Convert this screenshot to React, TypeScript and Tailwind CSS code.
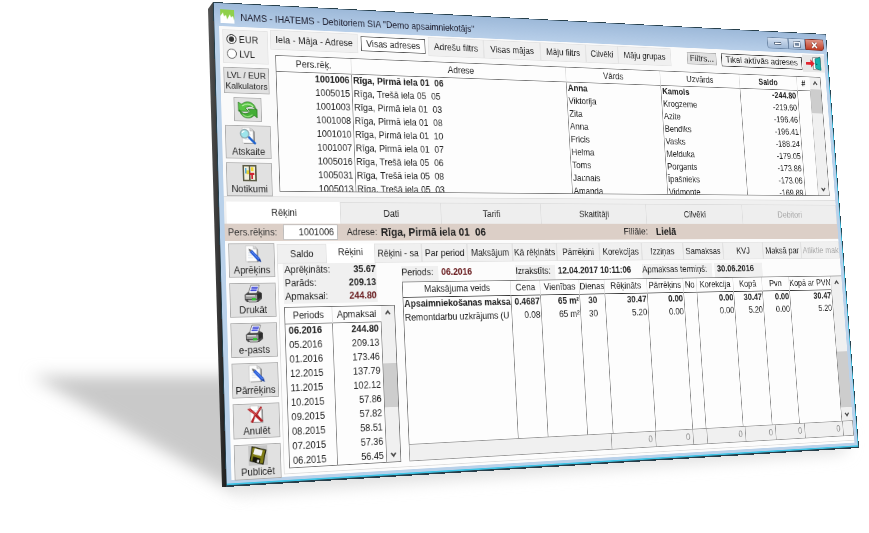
import { useState } from 'react'
import type { ReactNode } from 'react'
import clsx from 'clsx'

const WIDTH = 920
const HEIGHT = 610

// corners of the tilted window: top left, top right, bottom right, bottom left
const CORNERS = [
    [213, 2],
    [826, 34],
    [859, 448],
    [226, 487],
]

function tilt() {
    const [[x0, y0], [x1, y1], [x2, y2], [x3, y3]] = CORNERS
    const dx1 = x1 - x2
    const dx2 = x3 - x2
    const sx = x0 - x1 + x2 - x3
    const dy1 = y1 - y2
    const dy2 = y3 - y2
    const sy = y0 - y1 + y2 - y3
    const det = dx1 * dy2 - dx2 * dy1
    const g = (sx * dy2 - dx2 * sy) / det
    const h = (dx1 * sy - sx * dy1) / det
    const m = [
        (x1 - x0 + g * x1) / WIDTH, (y1 - y0 + g * y1) / WIDTH, 0, g / WIDTH,
        (x3 - x0 + h * x3) / HEIGHT, (y3 - y0 + h * y3) / HEIGHT, 0, h / HEIGHT,
        0, 0, 1, 0,
        x0, y0, 0, 1,
    ]
    return `matrix3d(${m.join(',')})`
}

const topTabs = [
    { label: 'Iela - Māja - Adrese', width: 'w-[118px]' },
    { label: 'Visas adreses', width: 'w-[90px]' },
    { label: 'Adrešu filtrs', width: 'w-[80px]' },
    { label: 'Visas mājas', width: 'w-[84px]' },
    { label: 'Māju filtrs', width: 'w-[69px]' },
    { label: 'Cilvēki', width: 'w-[50px]' },
    { label: 'Māju grupas', width: 'w-[84px]' },
]

const people = [
    ['1001006', 'Rīga, Pirmā iela 01  06', 'Anna', 'Kamols', '-244.80'],
    ['1005015', 'Rīga, Trešā iela 05  05', 'Viktorija', 'Krogzeme', '-219.60'],
    ['1001003', 'Rīga, Pirmā iela 01  03', 'Zita', 'Azite', '-196.46'],
    ['1001008', 'Rīga, Pirmā iela 01  08', 'Anna', 'Bendiks', '-196.41'],
    ['1001010', 'Rīga, Pirmā iela 01  10', 'Fricis', 'Vasks', '-188.24'],
    ['1001007', 'Rīga, Pirmā iela 01  07', 'Helma', 'Melduka', '-179.05'],
    ['1005016', 'Rīga, Trešā iela 05  06', 'Toms', 'Porgants', '-173.86'],
    ['1005031', 'Rīga, Trešā iela 05  08', 'Jaunais', 'Īpašnieks', '-173.06'],
    ['1005013', 'Rīga, Trešā iela 05  03', 'Amanda', 'Vidmonte', '-169.89'],
]

const mainTabs = [
    { label: 'Rēķini', width: 'w-[149px]' },
    { label: 'Dati', width: 'w-[138px]' },
    { label: 'Tarifi', width: 'w-[144px]' },
    { label: 'Skaitītāji', width: 'w-[160px]' },
    { label: 'Cilvēki', width: 'w-[154px]' },
    { label: 'Debitori', width: 'w-[158px]' },
]

const subTabs = [
    'Saldo', 'Rēķini', 'Rēķini - sa', 'Par period', 'Maksājum', 'Kā rēķināts', 'Pārrēķini',
    'Korekcijas', 'Izziņas', 'Samaksas', 'KVJ', 'Maksā par', 'Atliktie mak',
]

const periods = [
    ['06.2016', '244.80'],
    ['05.2016', '209.13'],
    ['01.2016', '173.46'],
    ['12.2015', '137.79'],
    ['11.2015', '102.12'],
    ['10.2015', '57.86'],
    ['09.2015', '57.82'],
    ['08.2015', '58.51'],
    ['07.2015', '57.36'],
    ['06.2015', '56.45'],
]

const chargeColumns = [
    { label: 'Maksājuma veids', width: 'w-[151px]' },
    { label: 'Cena', width: 'w-[43px]' },
    { label: 'Vienības', width: 'w-[60px]' },
    { label: 'Dienas', width: 'w-[33px]' },
    { label: 'Rēķināts', width: 'w-[67px]' },
    { label: 'Pārrēķins', width: 'w-[58px]' },
    { label: 'No', width: 'w-[22px]' },
    { label: 'Korekcija', width: 'w-[61px]' },
    { label: 'Kopā', width: 'w-[49px]' },
    { label: 'Pvn', width: 'w-[48px]' },
    { label: 'Kopā ar PVN', width: 'w-[64px]' },
]

const charges = [
    ['Apsaimniekošanas maksa', '0.4687', '65 m²', '30', '30.47', '0.00', '', '0.00', '30.47', '0.00', '30.47'],
    ['Remontdarbu uzkrājums (U', '0.08', '65 m²', '30', '5.20', '0.00', '', '0.00', '5.20', '0.00', '5.20'],
]

const totals = ['', '', '', '', '0', '0', '', '0', '0', '0', '0']

function Chevron({ down }: { down?: boolean }) {
    return (
        <svg viewBox="0 0 10 10" className="w-[10px] h-[10px] my-1 shrink-0" fill="none" stroke="#444" strokeWidth="2">
            <path d={down ? 'M2 3l3 4 3-4' : 'M2 7l3-4 3 4'} />
        </svg>
    )
}

function ScrollBar({ before, thumb }: { before: string; thumb: string }) {
    return (
        <div className="flex flex-col items-center w-[18px] shrink-0 bg-[#f0f0f0]">
            <Chevron />
            <div className={before} />
            <div className={clsx('w-full bg-[#cdcdcd]', thumb)} />
            <div className="grow" />
            <Chevron down />
        </div>
    )
}

function PageIcon({ children }: { children?: ReactNode }) {
    return (
        <svg viewBox="0 0 24 24" className="w-6 h-6">
            <path d="M6 2h10l4 4v16H6z" fill="#8b8b8b" />
            <path d="M4 1h10l4 4v16H4z" fill="#fdfdfd" stroke="#c3c3c3" strokeWidth="0.7" />
            <path d="M14 1v4h4" fill="#dcdcdc" stroke="#a9a9a9" strokeWidth="0.7" />
            <path d="M7 7h6M7 10h8M7 13h8M7 16h6" stroke="#d3dbe6" />
            {children}
        </svg>
    )
}

function PenIcon() {
    return (
        <PageIcon>
            <path d="M9 9l3-2.500 10 10.500-3 3z" fill="#2458d8" />
            <path d="M11.500 8.500l9 9.500" stroke="#6f9df5" />
            <path d="M19 20l3-3 1.500 5z" fill="#143a9a" />
            <path d="M9 9l3-2.500-4.500-2z" fill="#666" />
        </PageIcon>
    )
}

function SearchIcon() {
    return (
        <PageIcon>
            <path d="M12 13l8 8" stroke="#1e63cf" strokeWidth="3" strokeLinecap="round" />
            <circle cx="7" cy="9" r="5.500" fill="#9ce5ec" stroke="#8fa9af" strokeWidth="1.500" />
            <path d="M4 8a3 3 0 0 1 3-2.500" stroke="#fff" strokeWidth="1.500" fill="none" />
        </PageIcon>
    )
}

function CancelIcon() {
    return (
        <PageIcon>
            <path d="M0 5l4-1 7 6 6-8 2 1-6 9 7 8-3 1-7-7L7 22l-3-1 5-9z" fill="#b31f24" />
            <path d="M2.500 5l8 6.500L17 4" stroke="#e2686a" fill="none" />
        </PageIcon>
    )
}

function NotesIcon() {
    return (
        <svg viewBox="0 0 24 24" className="w-6 h-6">
            <path d="M3 1h18v21H3z" fill="#5b5b45" />
            <path d="M5 3h6v17H5zM13 3h6v17h-6z" fill="#f1efdc" />
            <path d="M6 5h2v7H6z" fill="#59aee0" />
            <path d="M8 8h3v5H8z" fill="#e6d233" />
            <path d="M14 4h3v5h-3z" fill="#f3d92e" />
            <path d="M12 11h6v3h-2v5h-2v-5h-2z" fill="#cf2430" />
        </svg>
    )
}

function PrinterIcon() {
    return (
        <svg viewBox="0 0 24 24" className="w-6 h-6">
            <path d="M9 1h11l-3 10H6z" fill="#fff" stroke="#555" strokeWidth="0.8" />
            <path d="M10 3.500h8M9.500 5.500h8M8.500 7.500h8" stroke="#3f49d8" strokeWidth="1.3" />
            <path d="M1 13l5-4 1 2h9l2-3 5 3v7l-5 4H4l-3-3z" fill="#4a4a4a" />
            <path d="M2 13h15v5H2z" fill="#9a9a9a" />
            <path d="M17 12l5-2v6l-5 3z" fill="#2c2c2c" />
            <path d="M3 14h11" stroke="#e6e6e6" strokeWidth="1.5" />
            <path d="M4 19h14l-2 3H6z" fill="#c9c9c9" stroke="#333" strokeWidth="0.6" />
            <path d="M10 17h5v3h-5z" fill="#35c435" />
        </svg>
    )
}

function FloppyIcon() {
    return (
        <svg viewBox="0 0 24 24" className="w-6 h-6">
            <path d="M0 0h24v24H0z" fill="#c6c6c6" />
            <path d="M5 1l17 5-4 17-16-5z" fill="#807d16" stroke="#1c1c0a" strokeWidth="1.2" />
            <path d="M8 3l10 3-2 7-10-3z" fill="#f2f2f2" />
            <path d="M6 13l9 3-1.500 6-9-3z" fill="#15150c" />
            <path d="M11 17l2.500.8-1 3.200-2.300-.8z" fill="#ececec" />
        </svg>
    )
}

function RefreshIcon() {
    return (
        <svg viewBox="0 0 28 26" className="w-7 h-[26px]" stroke="#24701c" strokeWidth="0.8">
            <path d="M2 3l4 3C11 1 21 1 24 10l1 3c-4-6-10-6-14-2l4 4H2z" fill="#58c544" />
            <path d="M26 23l-4-3C17 25 7 25 4 16l-1-3c4 6 10 6 14 2l-3-3h12z" fill="#43ae35" />
            <path d="M7 8c5-4 11-3 14 1" stroke="#b9f0a6" strokeWidth="1.5" fill="none" />
            <path d="M7 19c3 3 9 4 13 0" stroke="#8ee07a" strokeWidth="1.5" fill="none" />
        </svg>
    )
}

function DoorIcon() {
    return (
        <svg viewBox="0 0 28 22" className="w-7 h-[22px]">
            <path d="M13 2h13v18H13z" fill="#fff" stroke="#555" />
            <path d="M17 4l9-3v20l-9-3z" fill="#17b3ad" stroke="#0a6c6a" strokeWidth="0.8" />
            <path d="M1 9h8V5l7 6-7 6v-4H1z" fill="#e32530" />
            <circle cx="19.5" cy="12" r="1" fill="#043f3f" />
        </svg>
    )
}

function SideButton({ label, icon }: { label: string; icon: ReactNode }) {
    return (
        <button className="flex flex-col items-center justify-between h-[43px] w-full shrink-0 pt-px bg-[#e1e1e1] border border-[#adadad] whitespace-nowrap">
            {icon}
            <span className="leading-4">{label}</span>
        </button>
    )
}

function TitleBar() {
    return (
        <header className="flex items-start h-[30px] shrink-0 pl-2 pr-[5px] bg-linear-to-b from-[#9db9d9] to-[#b8cfe9]">
            <svg viewBox="0 0 18 18" className="w-[18px] h-[18px] mt-2">
                <path d="M0 0h18v18H0z" fill="#8fd04a" />
                <path d="M0 18V9l3-5 2 5 2-2 2 6 3-7 2 4 2-2 2 6v4z" fill="#fff" />
            </svg>
            <h1 className="grow pl-2 pt-2 leading-5 text-[#1b1b2b]">
                NAMS - IHATEMS - Debitoriem SIA "Demo apsaimniekotājs"
            </h1>
            <div className="flex pt-2">
                <button aria-label="Minimize" className="flex items-center justify-center w-9 h-[17px] border border-[#6d87a6] rounded-bl bg-linear-to-b from-[#d3e0f0] to-[#9fb8d6]">
                    <span className="w-3 h-1 bg-white border border-[#55667c]" />
                </button>
                <button aria-label="Maximize" className="flex items-center justify-center w-[29px] h-[17px] border border-[#6d87a6] bg-linear-to-b from-[#d3e0f0] to-[#9fb8d6]">
                    <span className="w-[11px] h-2 border-2 border-[#eef3f9] bg-[#7286a0] outline outline-[#66788f]" />
                </button>
                <button aria-label="Close" className="flex items-center justify-center w-8 h-[17px] border border-[#7c2a20] rounded-br bg-linear-to-b from-[#dd9284] to-[#c03a22]">
                    <svg viewBox="0 0 12 10" className="w-3 h-[10px]">
                        <path d="M2 1l8 8M10 1l-8 8" stroke="#6b2a24" strokeWidth="4" />
                        <path d="M2 1l8 8M10 1l-8 8" stroke="#fff" strokeWidth="2.5" />
                    </svg>
                </button>
            </div>
        </header>
    )
}

function CurrencyPicker() {
    const [currency, setCurrency] = useState('EUR')
    return (
        <div className="flex flex-col justify-center gap-[3px] h-11 pl-1 bg-[#f0f0f0] border border-[#e4e4e4]">
            {['EUR', 'LVL'].map((c) => (
                <label key={c} className="flex items-center gap-[3px] leading-4">
                    <input
                        type="radio"
                        name="currency"
                        checked={currency === c}
                        onChange={() => setCurrency(c)}
                        className="appearance-none w-[13px] h-[13px] rounded-full border border-[#444] bg-white checked:bg-[#333] checked:border-[#333] checked:shadow-[inset_0_0_0_2px_white]"
                    />
                    {c}
                </label>
            ))}
        </div>
    )
}

function AddressTable() {
    return (
        <div className="flex grow min-h-0 ml-[6px] mr-[9px] mb-[6px] border border-[#777] bg-[#fdfdfd] overflow-hidden">
            <table className="grow table-fixed h-fit">
                <colgroup>
                    <col className="w-[100px]" />
                    <col className="w-[309px]" />
                    <col className="w-[147px]" />
                    <col className="w-[129px]" />
                    <col className="w-[97px]" />
                    <col />
                </colgroup>
                <thead>
                    <tr className="h-5 border-b border-[#777]">
                        <th className="font-normal border-r border-[#ddd]">Pers.rēķ.</th>
                        <th className="font-normal border-r border-[#ddd]">Adrese</th>
                        <th className="font-normal border-r border-[#ddd]">Vārds</th>
                        <th className="font-normal border-r border-[#ddd]">Uzvārds</th>
                        <th className="border-r border-[#ddd]">Saldo</th>
                        <th>#</th>
                    </tr>
                </thead>
                <tbody>
                    {people.map((row, i) => (
                        <tr key={row[0]} className={clsx('h-[18px]', i === 0 && 'font-bold')}>
                            {row.map((cell, n) => (
                                <td
                                    key={n}
                                    className={clsx(
                                        'px-[2px] border-r border-[#888] leading-4 whitespace-pre',
                                        (n === 0 || n === 4) && 'text-right'
                                    )}
                                >
                                    {cell}
                                </td>
                            ))}
                            <td className="border-r border-[#bbb]" />
                        </tr>
                    ))}
                </tbody>
            </table>
            <ScrollBar before="h-0 shrink-0" thumb="h-9 shrink-0" />
        </div>
    )
}

function UpperPane() {
    return (
        <section className="flex h-[220px] shrink-0 bg-[#fafafa] border-b border-[#ddd]">
            <div className="flex flex-col gap-[5px] w-[63px] shrink-0 pl-1 pt-1">
                <CurrencyPicker />
                <button className="h-[34px] shrink-0 bg-[#e1e1e1] border border-[#adadad] text-[11px] leading-[14px]">
                    LVL / EUR<br />Kalkulators
                </button>
                <button aria-label="Atjaunot" className="flex items-center justify-center w-9 h-[31px] shrink-0 self-center bg-[#e1e1e1] border border-[#adadad]">
                    <RefreshIcon />
                </button>
                <SideButton label="Atskaite" icon={<SearchIcon />} />
                <SideButton label="Notikumi" icon={<NotesIcon />} />
            </div>
            <div className="flex flex-col grow min-w-0 pl-[3px]">
                <div className="flex items-center h-[35px] shrink-0 pb-[5px]">
                    <nav className="flex grow">
                        {topTabs.map((tab, i) => (
                            <button
                                key={tab.label}
                                className={clsx(
                                    'shrink-0 whitespace-nowrap',
                                    tab.width,
                                    i === 1
                                        ? 'h-5 mx-1 bg-white border border-[#555] self-center'
                                        : 'h-[26px] bg-[#f0f0f0] border border-[#e4e4e4]'
                                )}
                            >
                                {tab.label}
                            </button>
                        ))}
                    </nav>
                    <button className="w-12 h-[18px] mr-2 bg-[#e1e1e1] border border-[#adadad] text-[13px] leading-4">Filtrs...</button>
                    <button className="w-[136px] h-[19px] bg-[#f4f4f4] border border-[#333] text-[13px] leading-4 whitespace-nowrap">
                        Tikai aktīvās adreses
                    </button>
                    <button aria-label="Iziet" className="flex items-center justify-center w-[38px] h-[26px] ml-px bg-[#e8e8e8]">
                        <DoorIcon />
                    </button>
                </div>
                <AddressTable />
            </div>
        </section>
    )
}

function InvoicePeriods() {
    return (
        <div className="flex flex-col w-[147px] shrink-0">
            <dl className="grid grid-cols-[62px_1fr] w-[124px] mb-1 leading-[17px] bg-[#f0f0f0]">
                <dt className="pl-[2px]">Aprēķināts:</dt>
                <dd className="pr-px text-right font-bold">35.67</dd>
                <dt className="pl-[2px]">Parāds:</dt>
                <dd className="pr-px text-right font-bold">209.13</dd>
                <dt className="pl-[2px]">Apmaksai:</dt>
                <dd className="pr-px text-right font-bold text-[#6b1f22]">244.80</dd>
            </dl>
            <div className="flex h-[201px] border border-[#777] bg-[#fdfdfd]">
                <table className="grow table-fixed">
                    <thead>
                        <tr className="h-5 border-b border-[#777]">
                            <th className="w-[61px] font-normal border-r border-[#ddd]">Periods</th>
                            <th className="font-normal">Apmaksai</th>
                        </tr>
                    </thead>
                    <tbody>
                        {periods.map(([period, amount], i) => (
                            <tr key={period} className={clsx('h-[18px]', i === 0 && 'font-bold')}>
                                <td className="pl-1 border-r border-[#888] leading-4">{period}</td>
                                <td className="pr-[3px] border-r border-[#888] text-right leading-4">{amount}</td>
                            </tr>
                        ))}
                    </tbody>
                </table>
                <ScrollBar before="h-14 shrink-0" thumb="h-14 shrink-0" />
            </div>
        </div>
    )
}

function InvoiceDetails() {
    return (
        <div className="flex flex-col grow min-w-0 pl-[11px]">
            <dl className="flex h-[25px] pt-[5px] shrink-0 leading-4 whitespace-nowrap">
                <dt className="w-[51px] bg-[#f0f0f0]">Periods:</dt>
                <dd className="w-[110px] pl-1 font-bold text-[#6b1f22]">06.2016</dd>
                <dt className="w-[58px] bg-[#f0f0f0]">Izrakstīts:</dt>
                <dd className="w-[132px] pl-1 font-bold">12.04.2017 10:11:06</dd>
                <dt className="w-[110px] bg-[#f0f0f0]">Apmaksas termiņš:</dt>
                <dd className="w-[78px] ml-1 pl-1 bg-[#f0f0f0] font-bold">30.06.2016</dd>
            </dl>
            <div className="flex h-[209px] shrink-0 border-t border-l border-[#777] bg-[#fdfdfd] overflow-hidden">
                <table className="grow table-fixed h-full">
                    <thead>
                        <tr className="h-[19px] border-b border-[#333]">
                            {chargeColumns.map((col) => (
                                <th key={col.label} className={clsx('font-normal border-r border-[#ddd] whitespace-nowrap overflow-hidden', col.width)}>
                                    {col.label}
                                </th>
                            ))}
                        </tr>
                    </thead>
                    <tbody>
                        {charges.map((row, i) => (
                            <tr key={row[0]} className={clsx('h-[18px]', i === 0 && 'font-bold')}>
                                {row.map((cell, n) => (
                                    <td
                                        key={n}
                                        className={clsx(
                                            'px-px border-r border-[#888] leading-4 whitespace-nowrap overflow-hidden',
                                            n === 3 ? 'text-center' : n > 0 && 'text-right'
                                        )}
                                    >
                                        {cell}
                                    </td>
                                ))}
                            </tr>
                        ))}
                        <tr>
                            {chargeColumns.map((col) => (
                                <td key={col.label} className="border-r border-[#888]" />
                            ))}
                        </tr>
                    </tbody>
                </table>
                <ScrollBar before="h-[91px] shrink-0" thumb="h-20 shrink-0" />
            </div>
            <div className="flex h-[22px] shrink-0 bg-[#f0f0f0] border border-[#999] text-[#888]">
                {totals.map((total, n) => (
                    <output
                        key={n}
                        className={clsx('shrink-0 pr-1 text-right leading-5', n > 3 && 'border-l border-[#999]', chargeColumns[n].width)}
                    >
                        {total}
                    </output>
                ))}
                <span className="border-l border-[#999]" />
            </div>
        </div>
    )
}

function LowerPane() {
    return (
        <section className="flex flex-col grow min-h-0 pt-[6px] bg-[#f0f0f0]">
            <nav className="flex h-7 shrink-0 pl-[3px]">
                {mainTabs.map((tab, i) => (
                    <button
                        key={tab.label}
                        disabled={i === 5}
                        className={clsx(
                            'shrink-0 border-r border-[#ddd] disabled:text-[#aaa]',
                            tab.width,
                            i === 0 ? 'bg-white' : 'border-t bg-[#eee]'
                        )}
                    >
                        {tab.label}
                    </button>
                ))}
            </nav>
            <div className="flex items-center h-[22px] shrink-0 pl-1 bg-[#dccfc7]">
                <label htmlFor="account" className="w-[71px] text-[#333]">Pers.rēķins:</label>
                <input id="account" defaultValue="1001006" className="w-[72px] h-5 pr-1 bg-white border border-[#bbb] text-right" />
                <span className="w-[46px] ml-3">Adrese:</span>
                <strong className="w-[352px] text-[14px] whitespace-pre">Rīga, Pirmā iela 01  06</strong>
                <span className="w-[50px] text-[13px]">Filiāle:</span>
                <strong className="text-[14px]">Lielā</strong>
            </div>
            <div className="flex grow min-h-0 bg-[#fcfcfc]">
                <div className="flex flex-col gap-[7px] w-[63px] shrink-0 pl-1 pt-[3px]">
                    <SideButton label="Aprēķins" icon={<PenIcon />} />
                    <SideButton label="Drukāt" icon={<PrinterIcon />} />
                    <SideButton label="e-pasts" icon={<PrinterIcon />} />
                    <SideButton label="Pārrēķins" icon={<PenIcon />} />
                    <SideButton label="Anulēt" icon={<CancelIcon />} />
                    <SideButton label="Publicēt" icon={<FloppyIcon />} />
                </div>
                <div className="flex flex-col grow min-w-0 pl-[3px] pt-1">
                    <nav className="grid grid-cols-13 h-[25px] shrink-0">
                        {subTabs.map((label, i) => (
                            <button
                                key={label}
                                disabled={i === 12}
                                className={clsx(
                                    'px-px whitespace-nowrap overflow-hidden disabled:text-[#aaa]',
                                    i === 1 ? 'bg-white pb-1' : 'bg-[#f0f0f0] border border-[#e2e2e2]'
                                )}
                            >
                                {label}
                            </button>
                        ))}
                    </nav>
                    <div className="flex grow mb-[3px] pl-[6px] border-b border-l border-[#ddd]">
                        <InvoicePeriods />
                        <InvoiceDetails />
                    </div>
                </div>
            </div>
        </section>
    )
}

function Backdrop() {
    return (
        <svg viewBox="0 0 869 533" className="absolute top-0 left-0 w-[869px] h-[533px]">
            <defs>
                <filter id="soft" x="-20%" y="-50%" width="140%" height="200%">
                    <feGaussianBlur stdDeviation="8" />
                </filter>
                <linearGradient id="edge" x1="0" x2="1">
                    <stop offset="0" stopColor="#555" />
                    <stop offset="1" stopColor="#1c1c1c" />
                </linearGradient>
            </defs>
            <path d="M32 376H240V494z" fill="#c9c9c9" filter="url(#soft)" />
            <path d="M240 466L848 434 844 452 240 494z" fill="#dedede" filter="url(#soft)" />
            <path d="M208 9L213 2 214 2 227 487 222 487z" fill="url(#edge)" />
        </svg>
    )
}

export default function App() {
    return (
        <main className="relative min-h-screen overflow-hidden bg-white">
            <Backdrop />
            <div
                className="absolute top-0 left-0 flex flex-col w-[920px] h-[610px] origin-top-left border border-b-2 border-[#27404c] bg-[#b9d1ea] shadow-[inset_-1px_-2px_0_#3fc4e6] text-[#222] text-[12px] font-['Liberation_Sans',Arial,sans-serif]"
                style={{ transform: tilt() }}
            >
                <TitleBar />
                <div className="flex flex-col grow min-h-0 mx-[6px] mb-[6px]">
                    <UpperPane />
                    <LowerPane />
                </div>
            </div>
        </main>
    )
}
